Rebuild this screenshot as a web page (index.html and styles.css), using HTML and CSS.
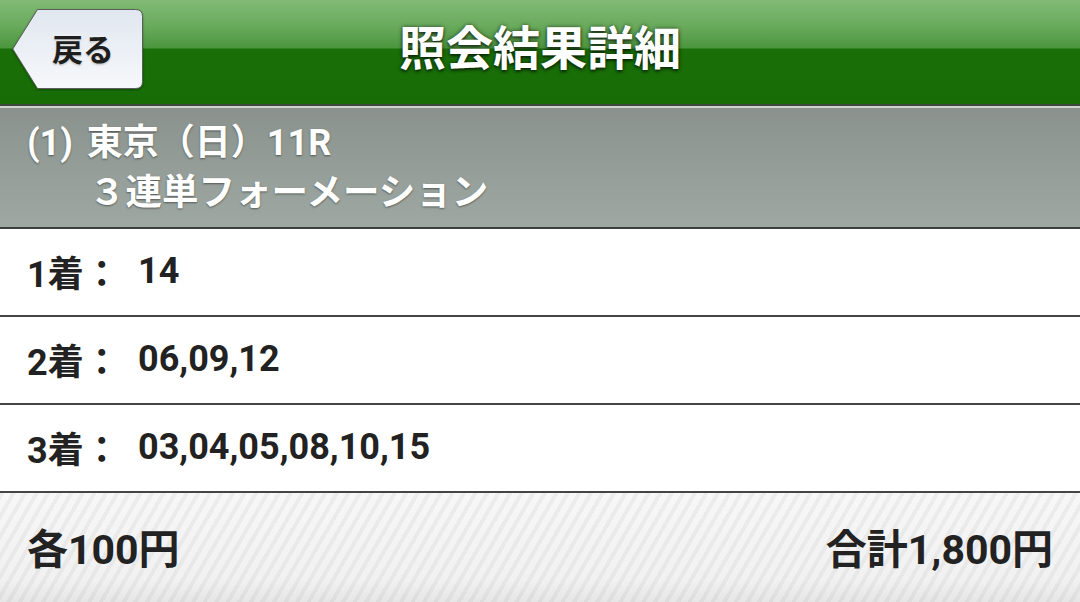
FILE: index.html
```html
<!DOCTYPE html>
<html lang="ja">
<head>
<meta charset="utf-8">
<link rel="stylesheet" href="styles.css">
</head>
<body>
<div class="page">
  <header class="topbar">
    <div class="back-cell">
      <a class="back">
        <svg class="back-shape" width="131" height="80" viewBox="0 0 131 80">
          <defs>
            <linearGradient id="bg" x1="0" y1="0" x2="0" y2="1">
              <stop offset="0" stop-color="#e1e7f0"/>
              <stop offset="1" stop-color="#f6f8fb"/>
            </linearGradient>
          </defs>
          <path d="M25.5,0.5 L123.5,0.5 Q130.5,0.5 130.5,7.5 L130.5,72.5 Q130.5,79.5 123.5,79.5 L25.5,79.5 L0.8,40 Z" fill="url(#bg)" stroke="#5a5f5a" stroke-width="1"/>
        </svg>
        <span class="back-label">戻る</span>
      </a>
    </div>
    <h1 class="title">照会結果詳細</h1>
    <div></div>
  </header>
  <section class="race">
    <div class="race-line first">(1) 東京（日）11R</div>
    <div class="race-line indent">３連単フォーメーション</div>
  </section>
  <div class="rows">
    <div class="row"><span class="label">1着：</span><span class="value">14</span></div>
    <div class="row"><span class="label">2着：</span><span class="value">06,09,12</span></div>
    <div class="row"><span class="label">3着：</span><span class="value">03,04,05,08,10,15</span></div>
  </div>
  <footer class="total">
    <span>各100円</span>
    <span>合計1,800円</span>
  </footer>
</div>
</body>
</html>
```
FILE: styles.css
```css
* { box-sizing: border-box; }
html, body { margin: 0; padding: 0; }
body {
  width: 1080px;
  height: 602px;
  overflow: hidden;
  font-family: Roboto, "Noto Sans CJK JP", sans-serif;
  font-weight: 700;
  background: #fff;
}
.page { display: flex; flex-direction: column; height: 602px; }

.topbar {
  height: 106px;
  display: grid;
  grid-template-columns: 1fr auto 1fr;
  align-items: center;
  background: linear-gradient(to bottom, #82bb76 0px, #6aab5d 25px, #4c963f 48px, #1a6f08 49px, #176c05 104px);
  border-bottom: 2px solid #3e483e;
}
.back-cell { align-self: start; padding: 9px 0 0 12px; }
.back {
  position: relative;
  display: block;
  width: 131px;
  height: 80px;
}
.back-shape { display: block; filter: drop-shadow(0 1px 1px rgba(0,0,0,0.35)); }
.back-label {
  position: absolute;
  left: 40px;
  top: 0;
  height: 76px;
  display: flex;
  align-items: center;
  font-size: 31px;
  color: #1e1e1e;
  font-family: "Noto Sans CJK JP", sans-serif;
  text-shadow: 0 0 3px rgba(255,255,255,0.9), 0 1px 2px rgba(0,0,0,0.35);
}
.title {
  margin: 0;
  font-size: 47px;
  font-weight: 700;
  color: #fff;
  line-height: 1.2;
  font-family: "Noto Sans CJK JP", sans-serif;
  text-shadow: 0 0 4px rgba(0,0,0,0.55), 0 2px 3px rgba(0,0,0,0.5);
  padding-bottom: 14px;
}

.race {
  border-top: 2px solid #cfd2cf;
  height: 123px;
  padding: 11px 0 0 27px;
  background: linear-gradient(to bottom, #8b928d, #9ea8a2);
  border-bottom: 2px solid #3a403c;
  color: #fff;
  font-size: 36px;
  text-shadow: 0 1px 2px rgba(0,0,0,0.45);
}
.race-line { height: 49px; line-height: 49px; white-space: nowrap; }
.race-line.first { word-spacing: 5px; }
.race-line.indent { padding-left: 62px; font-size: 36.5px; }

.rows { display: flex; flex-direction: column; }
.row {
  height: 88px;
  border-bottom: 2px solid #444;
  display: flex;
  align-items: center;
  padding-left: 27px;
  padding-bottom: 2px;
  font-size: 36px;
  color: #222;
}
.label { width: 111px; white-space: nowrap; }
.value { white-space: nowrap; }

.total {
  flex: 1;
  display: flex;
  justify-content: space-between;
  align-items: center;
  padding: 0 27px 4px 27px;
  font-size: 41px;
  color: #222;
  background:
    repeating-linear-gradient(-60deg, rgba(0,0,0,0) 0px, rgba(0,0,0,0) 6px, rgba(0,0,0,0.045) 6px, rgba(0,0,0,0.045) 10px),
    linear-gradient(to bottom, #f7f7f7, #f1f1f1 80%, #e6e6e6);
}
```
